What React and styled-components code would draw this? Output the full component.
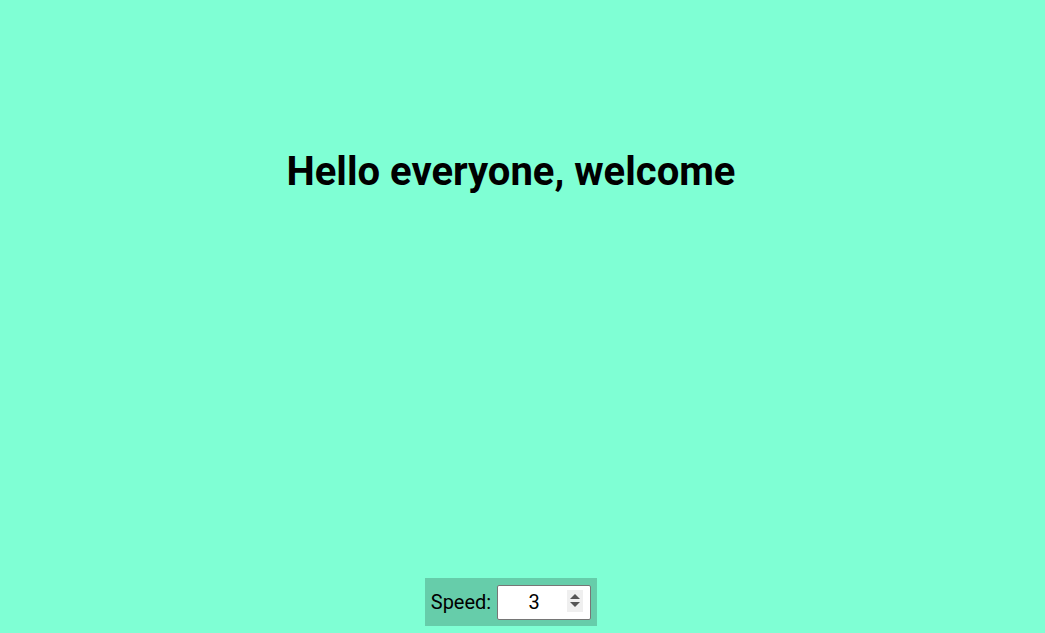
import React, { useState } from 'react'
import styled, { createGlobalStyle } from 'styled-components'

const Global = createGlobalStyle`
  html, body {
    margin: 0;
    padding: 0;
    background: #7fffd4;
  }
  body {
    font-family: Roboto, "Liberation Sans", sans-serif;
  }
`

const Page = styled.div`
  height: 633px;
  box-sizing: border-box;
  padding: 0 23px 7px 0;

  display: flex;
  flex-direction: column;
  align-items: center;
`

const Title = styled.h1`
  margin: 148px 0 0;

  font-size: 40px;
  font-weight: 700;
  line-height: 48px;
  color: #000;
`

const Controls = styled.div`
  margin-top: auto;
  height: 48px;
  box-sizing: border-box;
  padding: 0 6px;

  display: flex;
  align-items: center;
  gap: 6px;

  background-color: #66cdaa;
  font-size: 20px;
`

const Label = styled.label`
  color: #000;
`

const Field = styled.span`
  position: relative;
  display: inline-flex;
`

const NumberInput = styled.input`
  width: 94px;
  height: 35px;
  box-sizing: border-box;
  padding: 0 22px 0 2px;

  border: 1px solid #767676;
  border-radius: 2px;
  background: #fff;

  font-family: Roboto, "Liberation Sans", sans-serif;
  font-size: 20px;
  color: #000;
  text-align: center;
  -moz-appearance: textfield;

  &::-webkit-inner-spin-button,
  &::-webkit-outer-spin-button {
    -webkit-appearance: none;
    margin: 0;
  }
`

const Spinner = styled.span`
  position: absolute;
  top: 5px;
  right: 8px;
  width: 16px;
  height: 22px;

  display: flex;
  flex-direction: column;
  align-items: center;
  justify-content: center;
  gap: 3px;

  background: #efefef;
  pointer-events: none;
`

const Arrow = ({ down }) => (
  <svg width='10' height='5' viewBox='0 0 10 5'>
    <path d={down ? 'M0 0H10L5 5Z' : 'M0 5H10L5 0Z'} fill='#555' />
  </svg>
)

const App = () => {
  const [speed, setSpeed] = useState(3)

  return (
    <React.Fragment>
      <Global />
      <Page>
        <Title>Hello everyone, welcome</Title>

        <Controls>
          <Label htmlFor='speed'>Speed:</Label>
          <Field>
            <NumberInput
              id='speed'
              type='number'
              min='1'
              max='10'
              value={speed}
              onChange={e => setSpeed(e.target.value)}
            />
            <Spinner>
              <Arrow />
              <Arrow down />
            </Spinner>
          </Field>
        </Controls>
      </Page>
    </React.Fragment>
  )
}

export default App
